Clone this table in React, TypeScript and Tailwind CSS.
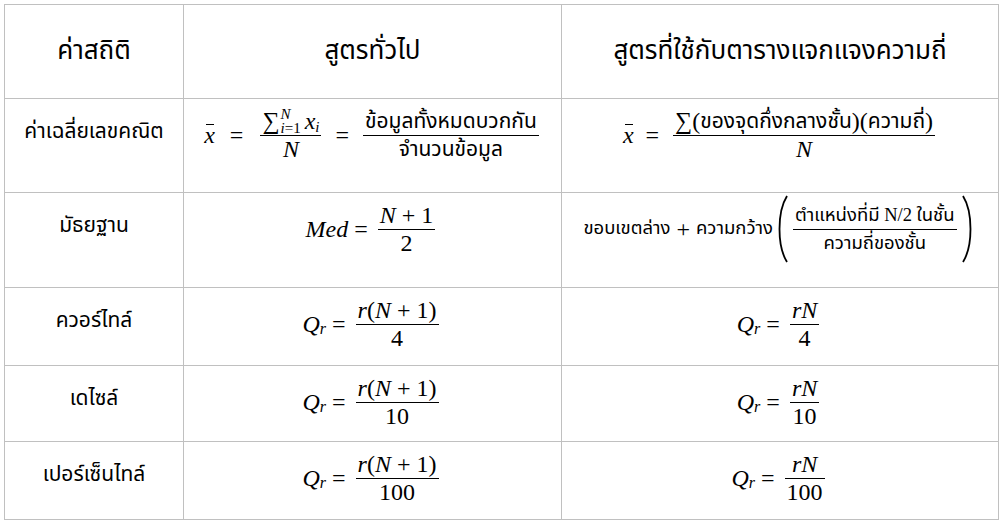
import React from "react";

const thai = { fontFamily: '"Tahoma", "Noto Sans Thai", "Noto Sans", "DejaVu Sans", sans-serif' };
const serif = { fontFamily: '"Liberation Serif", "DejaVu Serif", serif' };

function Frac({ num, den, m }: { num: React.ReactNode; den: React.ReactNode; m?: string }) {
  return (
    <span className={"inline-flex flex-col items-center " + (m ?? "mx-[4px]")}>
      <span className="flex items-end justify-center px-[2px] leading-[27px]">{num}</span>
      <span className="h-px bg-black self-stretch" />
      <span className="flex items-start justify-center px-[2px] leading-[27px]">{den}</span>
    </span>
  );
}

function I({ children }: { children: React.ReactNode }) {
  return <span className="italic">{children}</span>;
}

function Xbar() {
  return (
    <span className="relative italic inline-block">
      x
      <span className="absolute left-[2px] right-[1px] top-[7px] h-px bg-black" />
    </span>
  );
}

function Eq({ m }: { m?: string }) {
  return <span className={m ?? "mx-[6px]"}>=</span>;
}

function Qr() {
  return (
    <span className="italic">
      Q<sub className="text-[16px] relative top-[2px]">r</sub>
    </span>
  );
}

function Paren({ right }: { right?: boolean }) {
  return (
    <svg width="14" height="70" viewBox="0 0 14 70" className="mx-[2px]">
      {right ? (
        <path d="M2 2 C 12 18, 12 52, 2 68" fill="none" stroke="black" strokeWidth="1.8" />
      ) : (
        <path d="M12 2 C 2 18, 2 52, 12 68" fill="none" stroke="black" strokeWidth="1.8" />
      )}
    </svg>
  );
}

function Head({ children }: { children: React.ReactNode }) {
  return (
    <div className="bg-white flex items-center justify-center text-[26px] text-black" style={thai}>
      {children}
    </div>
  );
}

function Label({ children }: { children: React.ReactNode }) {
  return (
    <div className="bg-white flex flex-col">
      <div className="h-[66px] flex items-center justify-center text-[21px] text-black" style={thai}>
        {children}
      </div>
    </div>
  );
}

function Formula({ children }: { children: React.ReactNode }) {
  return (
    <div className="bg-white flex flex-col">
      <div className="h-[72px] flex items-center justify-center text-[24px] text-black" style={serif}>
        {children}
      </div>
    </div>
  );
}

export default function App() {
  return (
    <div className="w-[1004px] h-[524px] bg-white pt-[4px] pl-[4px]">
      <div className="grid grid-cols-[178px_377px_436px] grid-rows-[93px_93px_94px_77px_75px_77px] gap-px p-px bg-[#c0c0c0] w-fit">
        <Head>ค่าสถิติ</Head>
        <Head>สูตรทั่วไป</Head>
        <Head>สูตรที่ใช้กับตารางแจกแจงความถี่</Head>

        <Label>ค่าเฉลี่ยเลขคณิต</Label>
        <Formula>
          <Xbar />
          <Eq m="mx-[15px]" />
          <Frac
            m="mx-[2px]"
            num={
              <span className="flex items-center">
                <span className="text-[24px]">∑</span>
                <span className="inline-flex flex-col text-[15px] leading-[14px] ml-[1px]">
                  <I>N</I>
                  <span>
                    <I>i</I>=1
                  </span>
                </span>
                <span className="ml-[4px]">
                  <I>x</I>
                  <sub className="italic text-[15px]">i</sub>
                </span>
              </span>
            }
            den={<I>N</I>}
          />
          <Eq m="mx-[12px]" />
          <Frac
            m="mx-[2px]"
            num={<span style={thai} className="text-[21px]">ข้อมูลทั้งหมดบวกกัน</span>}
            den={<span style={thai} className="text-[21px]">จำนวนข้อมูล</span>}
          />
        </Formula>
        <Formula>
          <Xbar />
          <Eq m="mx-[12px]" />
          <Frac
            m="mx-[2px]"
            num={
              <span className="flex items-center">
                ∑(<span style={thai} className="text-[21px]">ของจุดกึ่งกลางชั้น</span>)(
                <span style={thai} className="text-[21px]">ความถี่</span>)
              </span>
            }
            den={<I>N</I>}
          />
        </Formula>

        <Label>มัธยฐาน</Label>
        <Formula>
          <I>Med</I>
          <Eq />
          <Frac num={<span><I>N</I> + 1</span>} den={<span>2</span>} />
        </Formula>
        <Formula>
          <span style={thai} className="text-[18.5px]">ขอบเขตล่าง</span>
          <span className="mx-[6px]">+</span>
          <span style={thai} className="text-[18.5px]">ความกว้าง</span>
          <Paren />
          <Frac
            m="mx-[2px]"
            num={
              <span className="text-[18.5px]">
                <span style={thai}>ตำแหน่งที่มี</span> N/2 <span style={thai}>ในชั้น</span>
              </span>
            }
            den={<span style={thai} className="text-[18.5px]">ความถี่ของชั้น</span>}
          />
          <Paren right />
        </Formula>

        <Label>ควอร์ไทล์</Label>
        <Formula>
          <Qr />
          <Eq />
          <Frac num={<span><I>r</I>(<I>N</I> + 1)</span>} den={<span>4</span>} />
        </Formula>
        <Formula>
          <Qr />
          <Eq />
          <Frac num={<I>rN</I>} den={<span>4</span>} />
        </Formula>

        <Label>เดไซล์</Label>
        <Formula>
          <Qr />
          <Eq />
          <Frac num={<span><I>r</I>(<I>N</I> + 1)</span>} den={<span>10</span>} />
        </Formula>
        <Formula>
          <Qr />
          <Eq />
          <Frac num={<I>rN</I>} den={<span>10</span>} />
        </Formula>

        <Label>เปอร์เซ็นไทล์</Label>
        <Formula>
          <Qr />
          <Eq />
          <Frac num={<span><I>r</I>(<I>N</I> + 1)</span>} den={<span>100</span>} />
        </Formula>
        <Formula>
          <Qr />
          <Eq />
          <Frac num={<I>rN</I>} den={<span>100</span>} />
        </Formula>
      </div>
    </div>
  );
}
